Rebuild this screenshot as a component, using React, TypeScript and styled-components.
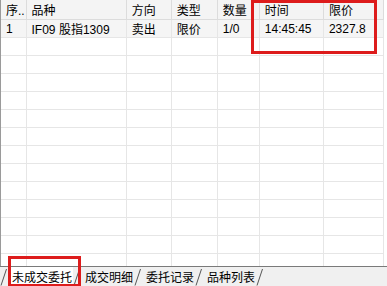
import * as React from "react";
import styled, { createGlobalStyle } from "styled-components";

const Global = createGlobalStyle`
    html, body {
        margin: 0;
        padding: 0;
        background: #ffffff;
    }
    body {
        font-family: "Liberation Sans", "Noto Sans CJK SC", sans-serif;
        font-size: 12px;
        color: #000;
    }
`;

const Frame = styled.div`
    position: relative;
    width: 387px;
    height: 286px;
    display: flex;
    flex-direction: column;
    overflow: hidden;
    background: #fff;
`;

const GridArea = styled.div`
    flex: 1;
    overflow: hidden;
    border-left: 1px solid #9a9a9a;
`;

const Table = styled.table`
    border-collapse: collapse;
    table-layout: fixed;
    width: 383px;
`;

const HeadCell = styled.th`
    height: 19px;
    padding: 0 0 0 5px;
    text-align: left;
    font-weight: normal;
    font-size: 12px;
    background: #f4f4f4;
    border-right: 1px solid #dcdcdc;
    border-bottom: 1px solid #dcdcdc;
    white-space: nowrap;
    overflow: hidden;
`;

const Row = styled.tr<{ $filled?: boolean }>`
    background: ${p => (p.$filled ? "#f5f5f5" : "#fff")};
`;

const Cell = styled.td`
    height: 17px;
    padding: 0 0 0 5px;
    font-size: 12px;
    border-right: 1px solid #e6e6e6;
    border-bottom: 1px solid #e6e6e6;
    white-space: nowrap;
    overflow: hidden;
`;

const TabBar = styled.div`
    height: 19px;
    border-top: 1px solid #7a7a7a;
    background: #f0f0f0;
    display: flex;
    align-items: stretch;
`;

const Tab = styled.div<{ $active?: boolean }>`
    display: flex;
    align-items: center;
    padding: 1px 1px 0 4px;
    font-family: "Noto Sans CJK SC", sans-serif;
    font-size: 12px;
    line-height: 1;
    background: ${p => (p.$active ? "#fff" : "transparent")};
`;

const Slash = styled.svg`
    width: 8px;
    height: 19px;
    flex: none;
`;

const Mark = styled.div`
    position: absolute;
    border: 3px solid #dd1c1c;
    box-sizing: border-box;
`;

const columns = [
    { title: "序..", width: 25 },
    { title: "品种", width: 100 },
    { title: "方向", width: 45 },
    { title: "类型", width: 46 },
    { title: "数量", width: 42 },
    { title: "时间", width: 64 },
    { title: "限价", width: 60 },
];

const orders = [["1", "IF09 股指1309", "卖出", "限价", "1/0", "14:45:45", "2327.8"]];

const tabs = ["未成交委托", "成交明细", "委托记录", "品种列表"];

const Sep: React.FC = () => (
    <Slash viewBox="0 0 8 19">
        <line x1="1" y1="18.5" x2="6.5" y2="2" stroke="#555" strokeWidth="1" />
    </Slash>
);

const App: React.FC = () => {
    const blanks = Array.from({ length: 14 });
    return (
        <Frame>
            <Global />
            <GridArea>
                <Table>
                    <colgroup>
                        {columns.map(c => (
                            <col key={c.title} style={{ width: c.width }} />
                        ))}
                    </colgroup>
                    <thead>
                        <tr>
                            {columns.map(c => (
                                <HeadCell key={c.title}>{c.title}</HeadCell>
                            ))}
                        </tr>
                    </thead>
                    <tbody>
                        {orders.map((o, i) => (
                            <Row key={i} $filled>
                                {o.map((v, j) => (
                                    <Cell key={j}>{v}</Cell>
                                ))}
                            </Row>
                        ))}
                        {blanks.map((_, i) => (
                            <Row key={"b" + i}>
                                {columns.map(c => (
                                    <Cell key={c.title} />
                                ))}
                            </Row>
                        ))}
                    </tbody>
                </Table>
            </GridArea>
            <TabBar>
                <Sep />
                {tabs.map((t, i) => (
                    <React.Fragment key={t}>
                        <Tab $active={i === 0}>{t}</Tab>
                        <Sep />
                    </React.Fragment>
                ))}
            </TabBar>
            <Mark style={{ left: 251, top: 0, width: 126, height: 54 }} />
            <Mark style={{ left: 8, top: 256, width: 73, height: 31 }} />
        </Frame>
    );
};

export default App;
